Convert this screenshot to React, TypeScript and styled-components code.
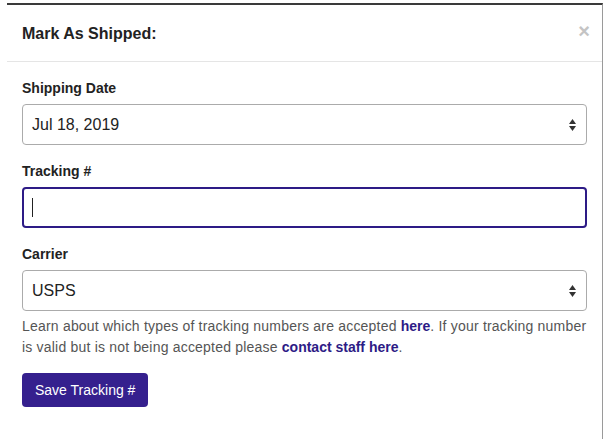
import React from 'react'
import styled, { createGlobalStyle } from 'styled-components'

const GlobalStyle = createGlobalStyle`
  body {
    margin: 0;
    background: #fff;
    font-family: "Liberation Sans", Arial, sans-serif;
    color: #333;
  }
`

const Page = styled.div`
  padding-top: 3px;
  padding-left: 7px;
  height: 436px;
  overflow: hidden;
`

const ModalWrapper = styled.div`
  border-top: 2px solid #3a3a3a;
  border-right: 1px solid #9a9a9a;
  width: 595px;
  height: 100%;
  background: #fff;
`

const Header = styled.div`
  display: flex;
  align-items: center;
  justify-content: space-between;
  height: 56px;
  padding: 0 12px 0 15px;
  border-bottom: 1px solid #e5e5e5;
`

const Title = styled.h4`
  margin: 2px 0 0;
  font-size: 16px;
  font-weight: bold;
  color: #222;
`

const Close = styled.span`
  font-size: 20px;
  font-weight: bold;
  color: #c4c4c4;
  line-height: 1;
  margin-top: -4px;
`

const Body = styled.div`
  padding: 16px 15px;
`

const Group = styled.div`
  margin-bottom: 16px;
`

const Label = styled.div`
  font-size: 14px;
  font-weight: bold;
  color: #222;
  line-height: 20px;
  margin-bottom: 6px;
`

const Box = styled.div<{ $focused?: boolean }>`
  display: flex;
  align-items: center;
  justify-content: space-between;
  height: 41px;
  box-sizing: border-box;
  padding: 0 9px;
  border: ${({ $focused }) => ($focused ? '2px solid #2d1b86' : '1px solid #ababab')};
  border-radius: 4px;
  font-size: 16px;
  color: #222;
  background: #fff;
`

const Caret = styled.span`
  display: block;
  width: 1px;
  height: 19px;
  background: #222;
  margin-left: -1px;
`

const Help = styled.p`
  margin: 5px 0 15px;
  font-size: 14px;
  line-height: 21px;
  letter-spacing: 0.2px;
  color: #555;
`

const Link = styled.a`
  color: #2d1b86;
  font-weight: bold;
  text-decoration: none;
  letter-spacing: 0;
`

const Button = styled.button`
  font-family: "Liberation Sans", Arial, sans-serif;
  font-size: 14px;
  color: #fff;
  background: #35208e;
  border: none;
  border-radius: 4px;
  height: 34px;
  padding: 0 13px;
`

function SelectArrows() {
  return (
    <svg width="9" height="14" viewBox="0 0 9 14">
      <path d="M4.5 1 L8 6 H1 Z" fill="#333" />
      <path d="M4.5 13 L8 8 H1 Z" fill="#333" />
    </svg>
  )
}

export default function App() {
  return (
    <Page>
      <GlobalStyle />
      <ModalWrapper>
        <Header>
          <Title>Mark As Shipped:</Title>
          <Close>×</Close>
        </Header>
        <Body>
          <Group>
            <Label>Shipping Date</Label>
            <Box>
              <span>Jul 18, 2019</span>
              <SelectArrows />
            </Box>
          </Group>
          <Group>
            <Label>Tracking #</Label>
            <Box $focused>
              <Caret />
            </Box>
          </Group>
          <div>
            <Label>Carrier</Label>
            <Box>
              <span>USPS</span>
              <SelectArrows />
            </Box>
          </div>
          <Help>
            Learn about which types of tracking numbers are accepted <Link href="#">here</Link>. If your tracking number
            is valid but is not being accepted please <Link href="#">contact staff here</Link>.
          </Help>
          <Button>Save Tracking #</Button>
        </Body>
      </ModalWrapper>
    </Page>
  )
}
